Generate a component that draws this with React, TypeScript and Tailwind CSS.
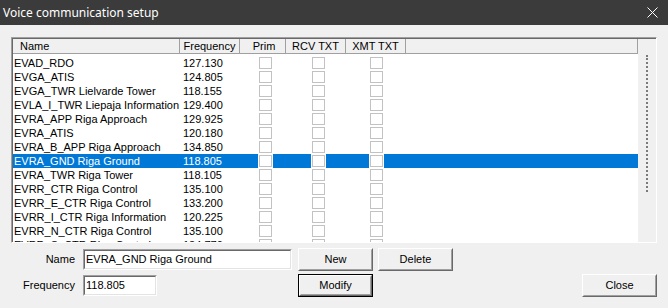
import React from 'react';

type Entry = { name: string; freq: string };

const entries: Entry[] = [
  { name: 'EVAD_RDO', freq: '127.130' },
  { name: 'EVGA_ATIS', freq: '124.805' },
  { name: 'EVGA_TWR Lielvarde Tower', freq: '118.155' },
  { name: 'EVLA_I_TWR Liepaja Information', freq: '129.400' },
  { name: 'EVRA_APP Riga Approach', freq: '129.925' },
  { name: 'EVRA_ATIS', freq: '120.180' },
  { name: 'EVRA_B_APP Riga Approach', freq: '134.850' },
  { name: 'EVRA_GND Riga Ground', freq: '118.805' },
  { name: 'EVRA_TWR Riga Tower', freq: '118.105' },
  { name: 'EVRR_CTR Riga Control', freq: '135.100' },
  { name: 'EVRR_E_CTR Riga Control', freq: '133.200' },
  { name: 'EVRR_I_CTR Riga Information', freq: '120.225' },
  { name: 'EVRR_N_CTR Riga Control', freq: '135.100' },
  { name: 'EVRR_S_CTR Riga Control', freq: '134.770' },
];

const SELECTED = 7;

function Check({ offset }: { offset: string }) {
  return (
    <div className={`h-[14px] ${offset} flex`}>
      <div className="h-[14px] w-[15px] bg-white px-[1px] pt-[1px]">
        <div className="h-[12px] w-[13px] border border-[#c2c2c2] bg-white" />
      </div>
    </div>
  );
}

function Button({ label, isDefault }: { label: string; isDefault?: boolean }) {
  return (
    <div className={`h-[23px] w-[75px] ${isDefault ? 'border border-black' : ''}`}>
      <div className="h-full w-full border border-t-white border-l-white border-r-[#696969] border-b-[#696969]">
        <div className="flex h-full w-full items-center justify-center border border-t-[#f0f0f0] border-l-[#f0f0f0] border-r-[#a0a0a0] border-b-[#a0a0a0] bg-[#f0f0f0] text-[11px] text-black">
          {label}
        </div>
      </div>
    </div>
  );
}

function Field({ value, width }: { value: string; width: string }) {
  return (
    <div className={`h-[21px] ${width} border border-t-[#a0a0a0] border-l-[#a0a0a0] border-r-white border-b-white`}>
      <div className="h-full w-full border border-t-[#696969] border-l-[#696969] border-r-[#e3e3e3] border-b-[#e3e3e3] bg-white pl-[1px] text-[11px] leading-[16px] text-black">
        {value}
      </div>
    </div>
  );
}

export default function App() {
  return (
    <div
      className="flex h-[308px] w-[668px] flex-col overflow-hidden bg-[#f0f0f0]"
      style={{ fontFamily: '"Liberation Sans", Arial, sans-serif' }}
    >
      {/* title bar */}
      <div className="flex h-[25px] items-center justify-between bg-[#3b3b3b] pl-[3px] pr-[10px]">
        <span className="text-[12px] text-white" style={{ fontFamily: '"Noto Sans", sans-serif' }}>
          Voice communication setup
        </span>
        <svg width="11" height="11" viewBox="0 0 11 11">
          <path d="M0.5 0.5 L10.5 10.5 M10.5 0.5 L0.5 10.5" stroke="#ffffff" strokeWidth="1" />
        </svg>
      </div>

      {/* list view */}
      <div className="ml-[11px] mt-[12px] h-[206px] w-[646px] border border-t-[#a0a0a0] border-l-[#a0a0a0] border-r-white border-b-white">
        <div className="flex h-full w-full border-t border-l border-t-[#696969] border-l-[#696969]">
          <div className="flex w-[625px] flex-col overflow-hidden bg-white">
            <div className="flex h-[15px] shrink-0 border-b border-[#a0a0a0] bg-[#f0f0f0] text-[11px] leading-[14px] text-black">
              <div className="w-[167px] border-r border-[#a0a0a0] pl-[7px]">Name</div>
              <div className="w-[60px] border-r border-[#a0a0a0] text-center">Frequency</div>
              <div className="w-[46px] border-r border-[#a0a0a0] pl-[3px] text-center">Prim</div>
              <div className="w-[60px] border-r border-[#a0a0a0] text-center">RCV TXT</div>
              <div className="w-[60px] border-r border-[#a0a0a0] text-center">XMT TXT</div>
              <div className="flex-1 border-r border-[#a0a0a0]" />
            </div>
            <div className="flex flex-col pt-[2px] text-[11px] leading-[14px]">
              {entries.map((e, i) => {
                const sel = i === SELECTED;
                return (
                  <div
                    key={e.name}
                    className={`flex h-[14px] shrink-0 ${sel ? 'bg-[#0078d7] text-white' : 'text-black'}`}
                  >
                    <div className="w-[167px] whitespace-nowrap pl-[1px]">{e.name}</div>
                    <div className="w-[60px] pl-[3px]">{e.freq}</div>
                    <div className="w-[46px]">
                      <Check offset="pl-[18px]" />
                    </div>
                    <div className="w-[60px]">
                      <Check offset="pl-[25px]" />
                    </div>
                    <div className="w-[60px]">
                      <Check offset="pl-[23px]" />
                    </div>
                    <div className="flex-1" />
                  </div>
                );
              })}
            </div>
          </div>
          {/* scroll area */}
          <div className="flex w-[18px] flex-col items-center bg-[#f0f0f0]">
            <div className="h-[16px] shrink-0" />
            <div className="h-[137px] w-[2px] shrink-0 border-l-2 border-dotted border-[#7a7a7a]" />
          </div>
        </div>
      </div>

      {/* editing controls */}
      <div className="mt-[5px] flex h-[23px] items-center">
        <div className="w-[79px] pr-[4px] text-right text-[11px] text-black">Name</div>
        <div className="ml-[4px]">
          <Field value="EVRA_GND Riga Ground" width="w-[209px]" />
        </div>
        <div className="ml-[6px]">
          <Button label="New" />
        </div>
        <div className="ml-[5px]">
          <Button label="Delete" />
        </div>
      </div>
      <div className="mt-[3px] flex h-[23px] items-center">
        <div className="w-[79px] pr-[4px] text-right text-[11px] text-black">Frequency</div>
        <div className="ml-[4px]">
          <Field value="118.805" width="w-[74px]" />
        </div>
        <div className="ml-[141px]">
          <Button label="Modify" isDefault />
        </div>
        <div className="ml-[209px]">
          <Button label="Close" />
        </div>
      </div>
    </div>
  );
}
